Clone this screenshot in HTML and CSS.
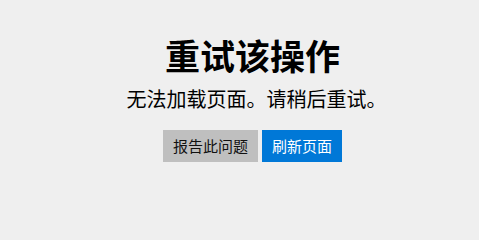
FILE: index.html
```html
<!DOCTYPE html>
<html lang="zh-CN">
<head>
<meta charset="utf-8">
<title>重试该操作</title>
<link rel="stylesheet" href="styles.css">
</head>
<body>
<main class="page">
  <h1 class="title">重试该操作</h1>
  <p class="message">无法加载页面。请稍后重试。</p>
  <div class="actions">
    <button class="btn btn-secondary" type="button">报告此问题</button>
    <button class="btn btn-primary" type="button">刷新页面</button>
  </div>
</main>
</body>
</html>
```
FILE: styles.css
```css
html, body {
  margin: 0;
  padding: 0;
  background: #efefef;
  height: 100%;
}
body {
  font-family: "Noto Sans CJK SC", "Noto Sans", sans-serif;
  color: #000;
}
.page {
  display: flex;
  flex-direction: column;
  align-items: center;
  padding: 35px 0 0 26px;
}
.title {
  margin: 0;
  font-size: 35px;
  line-height: 40px;
  font-weight: 700;
}
.message {
  margin: 11px 0 0;
  padding-left: 8px;
  font-size: 20px;
  line-height: 26px;
  font-weight: 400;
}
.actions {
  display: flex;
  gap: 4px;
  margin-top: 18px;
}
.btn {
  font-family: inherit;
  font-size: 15px;
  line-height: 20px;
  height: 32px;
  padding: 0 10px;
  border: 0;
  margin: 0;
  border-radius: 0;
}
.btn-secondary {
  background: #bfbfbf;
  color: #111;
}
.btn-primary {
  background: #0078d7;
  color: #fff;
}
```
